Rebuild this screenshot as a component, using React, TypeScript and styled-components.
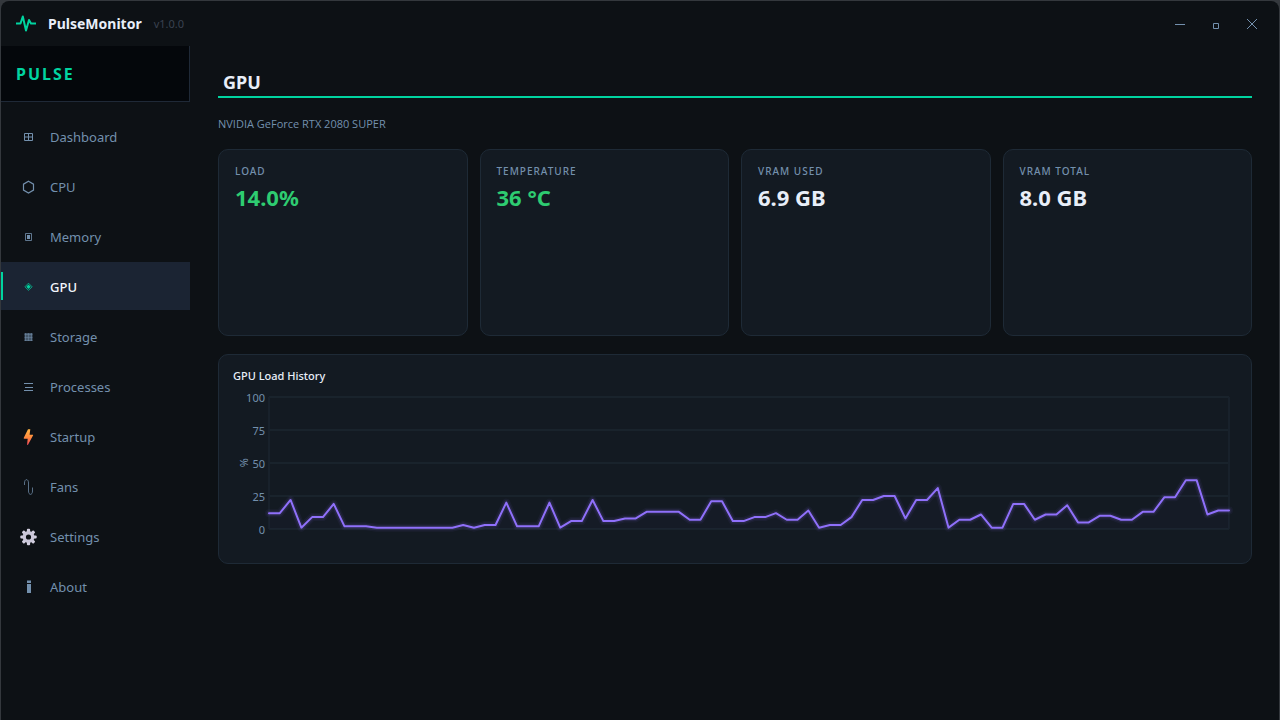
import React from "react";
import styled, { createGlobalStyle } from "styled-components";

const c = {
  bg: "#0d1115",
  deep: "#04070b",
  card: "#131a22",
  line: "#1e2a36",
  active: "#1b2433",
  accent: "#00d4a0",
  green: "#2ecc71",
  text: "#e8eef8",
  muted: "#7390ad",
  dim: "#3a4250",
  purple: "#8f70fa",
};

const GlobalStyle = createGlobalStyle`
  * { box-sizing: border-box; }
  body {
    margin: 0;
    background: #34383d;
    color: ${c.text};
    font-family: "Noto Sans", "Open Sans", sans-serif;
    font-size: 13px;
  }
  button { font: inherit; color: inherit; background: none; border: 0; padding: 0; }
  h1, h2, h3, p, ul, dl, dt, dd { margin: 0; padding: 0; }
`;

const Window = styled.div`
  min-height: 100vh;
  padding: 1px 1px 0;
`;

const Surface = styled.div`
  min-height: calc(100vh - 1px);
  display: flex;
  flex-direction: column;
  background: ${c.bg};
  border-radius: 8px 8px 0 0;
`;

const TitleBar = styled.header`
  height: 45px;
  display: flex;
  align-items: center;
  padding: 0 9px 0 15px;
`;

const AppName = styled.span`
  margin-left: 12px;
  font-size: 14px;
  font-weight: 700;
`;

const Version = styled.span`
  margin-left: 12px;
  flex: 1;
  font-size: 11px;
  color: ${c.dim};
`;

const WindowButton = styled.button`
  width: 36px;
  height: 36px;
  display: grid;
  place-items: center;
  color: ${c.muted};
`;

const Body = styled.div`
  flex: 1;
  display: flex;
`;

const Sidebar = styled.aside`
  width: 189px;
  flex: none;
`;

const Brand = styled.div`
  height: 56px;
  display: flex;
  align-items: center;
  padding-left: 15px;
  background: ${c.deep};
  border-right: 1px solid #1f2937;
  border-bottom: 1px solid #1f2937;
  color: ${c.accent};
  font-size: 16px;
  font-weight: 700;
  letter-spacing: 2px;
`;

const Nav = styled.nav`
  display: flex;
  flex-direction: column;
  gap: 2px;
  padding-top: 10px;
`;

const NavItem = styled.button<{ $active?: boolean }>`
  position: relative;
  height: 48px;
  display: flex;
  align-items: center;
  gap: 9px;
  padding: 2px 15px 0;
  color: ${(p) => (p.$active ? "#f4f7fc" : c.muted)};
  background: ${(p) => (p.$active ? c.active : "transparent")};
  font-weight: ${(p) => (p.$active ? 500 : 400)};
  svg { color: ${(p) => (p.$active ? c.accent : c.muted)}; }
  &::before {
    content: "";
    display: ${(p) => (p.$active ? "block" : "none")};
    position: absolute;
    left: 0;
    top: 10px;
    bottom: 10px;
    width: 2px;
    background: ${c.accent};
  }
`;

const Glyph = styled.svg`
  width: 25px;
  height: 25px;
  flex: none;
  fill: none;
  stroke: currentColor;
  stroke-width: 1;
`;

const Main = styled.main`
  flex: 1;
  min-width: 0;
  padding: 22px 27px 27px 28px;
`;

const PageTitle = styled.h1`
  padding: 0 5px;
  border-bottom: 2px solid ${c.accent};
  font-size: 18px;
  font-weight: 700;
  line-height: 28px;
`;

const Device = styled.p`
  margin-top: 18px;
  font-family: "Open Sans", "Noto Sans", sans-serif;
  font-size: 11px;
  line-height: 16px;
  color: ${c.muted};
`;

const Cards = styled.dl`
  display: grid;
  grid-template-columns: repeat(4, 1fr);
  gap: 12px;
  margin-top: 17px;
`;

const Card = styled.div`
  min-height: 187px;
  padding: 13px 16px;
  background: ${c.card};
  border: 1px solid ${c.line};
  border-radius: 10px;
`;

const CardLabel = styled.dt`
  font-size: 10px;
  font-weight: 500;
  letter-spacing: 1px;
  line-height: 16px;
  color: ${c.muted};
`;

const CardValue = styled.dd<{ $good?: boolean }>`
  font-size: 22px;
  font-weight: 700;
  line-height: 36px;
  color: ${(p) => (p.$good ? c.green : c.text)};
`;

const Panel = styled.section`
  margin-top: 18px;
  padding: 13px 22px 17px 14px;
  background: ${c.card};
  border: 1px solid ${c.line};
  border-radius: 10px;
`;

const PanelTitle = styled.h2`
  font-size: 11px;
  font-weight: 500;
  line-height: 16px;
`;

const Chart = styled.div`
  display: flex;
  margin-top: 13px;
  padding-bottom: 17px;
  font-size: 11px;
  color: ${c.muted};
`;

const Unit = styled.span`
  width: 20px;
  align-self: center;
  display: grid;
  place-items: center;
  writing-mode: vertical-rl;
  transform: rotate(180deg);
`;

const Scale = styled.div`
  width: 12px;
  margin: -16px 4px -17px 0;
  display: flex;
  flex-direction: column;
  align-items: flex-end;
  line-height: 33px;
`;

const Tick = styled.span``;

const Plot = styled.svg`
  flex: 1;
  min-width: 0;
  height: 132px;
  overflow: visible;
`;

const HISTORY = [
  12, 12, 22, 1, 9, 9, 19, 2, 2, 2, 1, 1, 1, 1, 1, 1, 1, 1, 3, 1, 3, 3, 20, 2, 2, 2, 20, 1, 6, 6,
  22, 6, 6, 8, 8, 13, 13, 13, 13, 7, 7, 21, 21, 6, 6, 9, 9, 12, 7, 7, 14, 1, 3, 3, 9, 22, 22, 25,
  25, 8, 22, 22, 31, 1, 7, 7, 11, 1, 1, 19, 19, 7, 11, 11, 18, 5, 5, 10, 10, 7, 7, 13, 13, 24, 24,
  37, 37, 11, 14, 14,
];

function HistoryChart({ values }: { values: number[] }) {
  const last = values.length - 1;
  const points = values.map((v, i) => `${i},${100 - v}`).join(" ");
  const fixed = { vectorEffect: "non-scaling-stroke" as const };
  return (
    <Plot viewBox={`0 0 ${last} 100`} preserveAspectRatio="none" role="img" aria-label="GPU load over time">
      {[0, 25, 50, 75, 100].map((y) => (
        <line key={y} x1="0" x2={last} y1={y} y2={y} stroke="#19232c" strokeWidth={2} {...fixed} />
      ))}
      {[0, last].map((x) => (
        <line key={x} x1={x} x2={x} y1="0" y2="100" stroke="#18212b" strokeWidth={2} {...fixed} />
      ))}
      <polygon points={`0,100 ${points} ${last},100`} fill={c.purple} fillOpacity="0.02" />
      <g fill="none" stroke={c.purple} strokeLinejoin="round" strokeLinecap="round">
        <polyline points={points} strokeWidth={8} opacity="0.05" {...fixed} />
        <polyline points={points} strokeWidth={5} opacity="0.1" {...fixed} />
        <polyline points={points} strokeWidth={2} {...fixed} />
      </g>
    </Plot>
  );
}

const GEAR_TEETH = [0, 45, 90, 135, 180, 225, 270, 315];

const NAV: { label: string; icon: React.ReactNode }[] = [
  {
    label: "Dashboard",
    icon: <path d="M8.5 8.5h8v7h-8zM12.5 8.5v7M8.5 12h8" />,
  },
  { label: "CPU", icon: <path d="M12.5 6.300l5 2.900v5.900l-5 2.900-5-2.900V9.200z" strokeWidth="1.200" /> },
  {
    label: "Memory",
    icon: (
      <>
        <path d="M9.500 8.500h6v7h-6z" strokeOpacity="0.8" />
        <path d="M11 10h3v4h-3z" fill="currentColor" stroke="none" />
      </>
    ),
  },
  {
    label: "GPU",
    icon: (
      <>
        <path d="M12.500 8.200l3.600 3.600-3.600 3.600-3.600-3.600z" strokeOpacity="0.7" />
        <path d="M12.500 9.600l2.200 2.200-2.200 2.200-2.200-2.200z" fill="currentColor" stroke="none" />
      </>
    ),
  },
  {
    label: "Storage",
    icon: (
      <>
        <path d="M8.500 8h8v8h-8z" fill="currentColor" fillOpacity="0.55" stroke="none" />
        <path d="M9.500 8v8M12.500 8v8M15.500 8v8M8.500 9.500h8M8.500 12.500h8M8.500 15.500h8" strokeOpacity="0.45" />
      </>
    ),
  },
  { label: "Processes", icon: <path d="M8 8.500h9M9 12.500h8M8 15.500h9" /> },
  {
    label: "Startup",
    icon: (
      <>
        <defs>
          <linearGradient id="bolt" x1="0" y1="0" x2="0" y2="1">
            <stop offset="0" stopColor="#ffb545" />
            <stop offset="0.5" stopColor="#ff8b3d" />
            <stop offset="1" stopColor="#f0455a" />
          </linearGradient>
        </defs>
        <path d="M12 4.300h2.300l-.7 5.400h3.200q.6.200.2.900L12 19.700q-.9.800-.9-.4l.6-5.500H8.300q-.9-.1-.5-1z" fill="url(#bolt)" stroke="none" />
      </>
    ),
  },
  {
    label: "Fans",
    icon: (
      <path
        d="M8.500 10V8c0-4.500 4-4.500 4 0v8c0 4.500 4 4.500 4 0v-3.500"
        strokeOpacity="0.75"
      />
    ),
  },
  {
    label: "Settings",
    icon: (
      <g stroke="none" fill="#d3cfe0">
        {GEAR_TEETH.map((a) => (
          <rect key={a} x="10.900" y="3.800" width="3.200" height="4.500" rx="1" transform={`rotate(${a} 12.500 12)`} />
        ))}
        <circle cx="12.500" cy="12" r="4.300" fill="none" stroke="#cbc7d9" strokeWidth="3.400" />
      </g>
    ),
  },
  {
    label: "About",
    icon: <path d="M11 5.500h4v2.500h-4zM11 9h4v9h-4z" fill="currentColor" stroke="none" />,
  },
];

const STATS = [
  { label: "LOAD", value: "14.0%", good: true },
  { label: "TEMPERATURE", value: "36 °C", good: true },
  { label: "VRAM USED", value: "6.9 GB" },
  { label: "VRAM TOTAL", value: "8.0 GB" },
];

export default function App() {
  return (
    <Window>
      <GlobalStyle />
      <Surface>
        <TitleBar>
          <svg width="20" height="20" viewBox="0 0 20 20" fill="none" stroke={c.accent} strokeWidth="2" strokeLinejoin="round" aria-hidden>
            <path d="M0 9.500h4.500L6.800 2.500l3.200 14L13 6l2 3.500h5" />
          </svg>
          <AppName>PulseMonitor</AppName>
          <Version>v1.0.0</Version>
          <WindowButton aria-label="Minimize">
            <svg width="12" height="12" stroke="currentColor" fill="none"><path d="M1 6.500h10" /></svg>
          </WindowButton>
          <WindowButton aria-label="Maximize">
            <svg width="12" height="12" stroke="currentColor" fill="none"><path d="M3.500 5.500h5v5h-5z" /></svg>
          </WindowButton>
          <WindowButton aria-label="Close">
            <svg width="12" height="12" stroke="currentColor" fill="none"><path d="M1 1l10 10M11 1L1 11" /></svg>
          </WindowButton>
        </TitleBar>
        <Body>
          <Sidebar>
            <Brand>PULSE</Brand>
            <Nav>
              {NAV.map(({ label, icon }) => (
                <NavItem key={label} $active={label === "GPU"}>
                  <Glyph viewBox="0 0 25 25" aria-hidden>{icon}</Glyph>
                  {label}
                </NavItem>
              ))}
            </Nav>
          </Sidebar>
          <Main>
            <PageTitle>GPU</PageTitle>
            <Device>NVIDIA GeForce RTX 2080 SUPER</Device>
            <Cards>
              {STATS.map((s) => (
                <Card key={s.label}>
                  <CardLabel>{s.label}</CardLabel>
                  <CardValue $good={s.good}>{s.value}</CardValue>
                </Card>
              ))}
            </Cards>
            <Panel>
              <PanelTitle>GPU Load History</PanelTitle>
              <Chart>
                <Unit>%</Unit>
                <Scale>
                  {[100, 75, 50, 25, 0].map((n) => (
                    <Tick key={n}>{n}</Tick>
                  ))}
                </Scale>
                <HistoryChart values={HISTORY} />
              </Chart>
            </Panel>
          </Main>
        </Body>
      </Surface>
    </Window>
  );
}
